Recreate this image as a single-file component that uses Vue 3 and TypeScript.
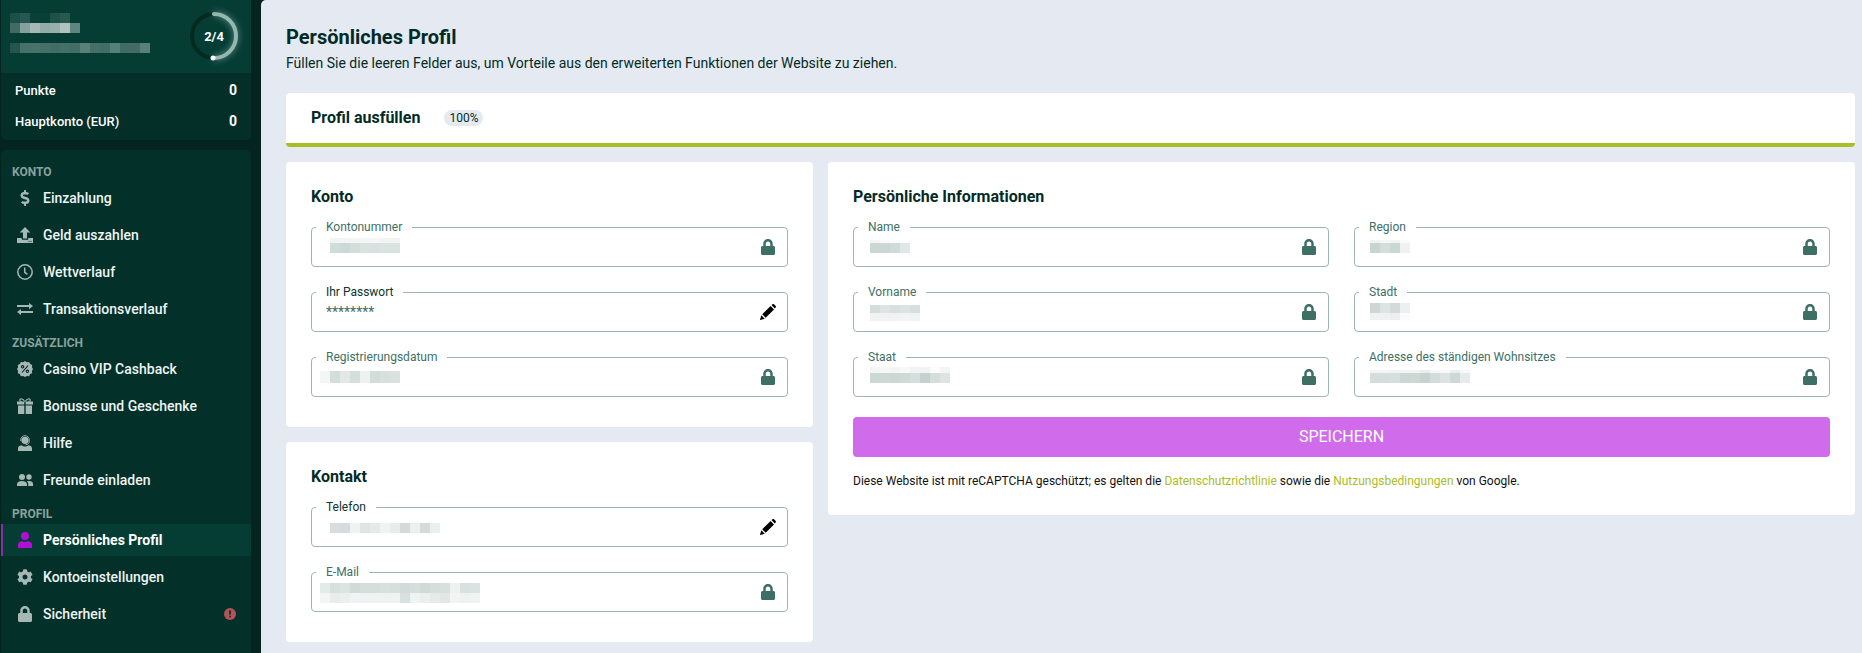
<script setup lang="ts">
interface MosaicRow {
  x: number
  y: number
  h: number
  cells: string[]
}

interface Field {
  id: string
  label: string
  value?: string
  editable?: boolean
  mosaic?: MosaicRow[]
}

interface NavItem {
  label: string
  icon: string
  active?: boolean
  alert?: boolean
}

interface NavGroup {
  title: string
  items: NavItem[]
}

const CELL = 10

const groups: NavGroup[] = [
  {
    title: 'Konto',
    items: [
      { label: 'Einzahlung', icon: 'dollar' },
      { label: 'Geld auszahlen', icon: 'upload' },
      { label: 'Wettverlauf', icon: 'clock' },
      { label: 'Transaktionsverlauf', icon: 'exchange' },
    ],
  },
  {
    title: 'Zusätzlich',
    items: [
      { label: 'Casino VIP Cashback', icon: 'percent' },
      { label: 'Bonusse und Geschenke', icon: 'gift' },
      { label: 'Hilfe', icon: 'support' },
      { label: 'Freunde einladen', icon: 'friends' },
    ],
  },
  {
    title: 'Profil',
    items: [
      { label: 'Persönliches Profil', icon: 'user', active: true },
      { label: 'Kontoeinstellungen', icon: 'cog' },
      { label: 'Sicherheit', icon: 'lock', alert: true },
    ],
  },
]

const nameMosaic: MosaicRow[] = [
  { x: 0, y: 0, h: 10, cells: ['#1c4f47', '#275850', '#0a4038', '#083f37', '#1e5148', '#27594f'] },
  { x: 0, y: 10, h: 10, cells: ['#3f6b64', '#84a29d', '#a4b9b6', '#93aca8', '#98b0ac', '#b0c3c0', '#5f857e'] },
  { x: 0, y: 30, h: 10, cells: ['#24564d', '#46716a', '#487169', '#45706a', '#426d66', '#45706a', '#426d66', '#5a807a', '#45706a', '#426d66', '#55807a', '#416c65', '#426d66', '#5b807a'] },
]

const account: Field[] = [
  {
    id: 'kontonummer', label: 'Kontonummer',
    mosaic: [
      { x: 18, y: 10, h: 5, cells: ['#f0f4f3', '#f3f5f5', '#f3f5f5', '#f3f6f5', '#f5f6f6', '#f2f5f4', '#f1f4f3'] },
      { x: 18, y: 15, h: 10, cells: ['#cfdcd9', '#ccd9d6', '#d3dedb', '#d8e2df', '#d8e1df', '#dae3e1', '#d9e3e0'] },
    ],
  },
  { id: 'passwort', label: 'Ihr Passwort', value: '********', editable: true },
  {
    id: 'registrierung', label: 'Registrierungsdatum',
    mosaic: [
      { x: 8, y: 13, h: 12, cells: ['#f4f5f5', '#d3ddda', '#e3e8e7', '#d6dedc', '#edf1f0', '#d2dcd9', '#d8e0de', '#dae2e0'] },
    ],
  },
]

const contact: Field[] = [
  {
    id: 'telefon', label: 'Telefon', editable: true,
    mosaic: [
      { x: 18, y: 15, h: 10, cells: ['#d6dfdd', '#d4dddb', '#f0f3f3', '#dee5e3', '#e5eae9', '#f0f3f3', '#e8edec', '#d2dcd9', '#ecf0ef', '#d2dcd9', '#ebefee'] },
    ],
  },
  {
    id: 'email', label: 'E-Mail',
    mosaic: [
      { x: 8, y: 10, h: 10, cells: ['#e4eae8', '#d7e0dd', '#dce4e2', '#d0dad7', '#d5dedb', '#d5dedb', '#d7e0dd', '#d6dfdc', '#d2dbd9', '#d5dedc', '#cfd9d6', '#d4dedb', '#d7e0dd', '#edf1f0', '#d8e1df', '#dae3e1'] },
      { x: 8, y: 20, h: 10, cells: ['#f2f5f4', '#e8edec', '#ebf0ef', '#f0f3f3', '#eef2f1', '#eef2f1', '#eef2f1', '#eef2f1', '#d8e0df', '#f0f3f3', '#ebefee', '#e6ebea', '#e0e7e5', '#f1f4f3', '#eef2f1', '#eff3f2'] },
    ],
  },
]

const personal: Field[] = [
  {
    id: 'name', label: 'Name',
    mosaic: [
      { x: 16, y: 12, h: 3, cells: ['#f4f6f6', '#f8f9f9', '#fafbfb'] },
      { x: 16, y: 15, h: 10, cells: ['#cad7d3', '#cbd7d4', '#d0dbd8', '#e1e6e6'] },
    ],
  },
  {
    id: 'region', label: 'Region',
    mosaic: [
      { x: 15, y: 12, h: 3, cells: ['#eff2f2', '#f5f7f7', '#f0f4f3', '#f9fafa'] },
      { x: 15, y: 15, h: 10, cells: ['#c7d4d0', '#d3dedb', '#cad8d4', '#eff2f1'] },
    ],
  },
  {
    id: 'vorname', label: 'Vorname',
    mosaic: [
      { x: 16, y: 12, h: 8, cells: ['#d5dddb', '#dee4e3', '#d8e0de', '#dde3e2', '#d5dfdc'] },
      { x: 16, y: 20, h: 8, cells: ['#f0f3f2', '#eff3f2', '#f0f3f2', '#f1f4f3', '#f0f3f3'] },
    ],
  },
  {
    id: 'stadt', label: 'Stadt',
    mosaic: [
      { x: 15, y: 10, h: 10, cells: ['#cfd7d5', '#dde2e2', '#d3dad9', '#edf0f0'] },
      { x: 15, y: 20, h: 7, cells: ['#f0f2f2', '#eff1f1', '#ecefee', '#fafbfb'] },
    ],
  },
  {
    id: 'staat', label: 'Staat',
    mosaic: [
      { x: 16, y: 9, h: 6, cells: ['#f3f6f5', '#f6f8f7', '#f2f5f4', '#f7f9f8', '#eff3f2', '#f2f4f4', '#fbfcfc', '#f4f6f5'] },
      { x: 16, y: 15, h: 10, cells: ['#ccd8d5', '#ced9d6', '#ccd8d4', '#cfdad7', '#d5dedc', '#c5d1cd', '#d5dedb', '#dee4e2'] },
    ],
  },
  {
    id: 'adresse', label: 'Adresse des ständigen Wohnsitzes',
    mosaic: [
      { x: 15, y: 12, h: 3, cells: ['#f3f5f5', '#f2f5f4', '#eff3f2', '#f1f4f3', '#f3f5f5', '#e8eeec', '#f5f7f7', '#f7f9f8', '#eaefee', '#f7f8f8'] },
      { x: 15, y: 15, h: 10, cells: ['#d3dddb', '#d5dedc', '#d6dfdd', '#cbd7d3', '#cdd8d5', '#c6d3cf', '#d2dcda', '#dce3e2', '#ced9d6', '#e7eaea'] },
    ],
  },
]

const sections = [
  { title: 'Konto', fields: account },
  { title: 'Kontakt', fields: contact },
]
</script>

<template>
  <svg class="sprite" aria-hidden="true">
    <symbol id="i-dollar" viewBox="-112 0 512 512"><path d="M209.200 233.400l-108-31.600C88.700 198.200 80 186.500 80 173.500c0-16.300 13.200-29.500 29.500-29.500h66.300c12.200 0 24.200 3.700 34.200 10.500 6.100 4.100 14.300 3.100 19.500-2l34.800-34c7.100-6.900 6.100-18.400-1.800-24.500C238 74.800 207.400 64.100 176 64V16c0-8.800-7.200-16-16-16h-32c-8.800 0-16 7.200-16 16v48h-2.500C45.800 64-5.400 118.700.5 183.600c4.200 46.100 39.400 83.600 83.800 96.600l102.500 30c12.500 3.700 21.200 15.300 21.200 28.300 0 16.300-13.200 29.500-29.500 29.500h-66.300C100 368 88 364.300 78 357.500c-6.100-4.100-14.300-3.100-19.500 2l-34.800 34c-7.100 6.900-6.100 18.400 1.800 24.500 24.500 19.200 55.100 29.900 86.500 30v48c0 8.800 7.200 16 16 16h32c8.800 0 16-7.200 16-16v-48.200c46.600-.9 90.300-28.600 105.700-72.700 21.500-61.600-14.600-124.800-72.500-141.700z" /></symbol>
    <symbol id="i-upload" viewBox="0 0 16 16"><path d="M8 0l5.300 5.400H10v6.100H6V5.400H2.700zM0 11h4.800v1.700h6.400V11H16v5H0z" /><circle cx="12" cy="14.300" r=".6" fill="#04302a" /><circle cx="14" cy="14.300" r=".6" fill="#04302a" /></symbol>
    <symbol id="i-clock" viewBox="0 0 16 16"><circle cx="8" cy="8" r="7.200" fill="none" stroke="currentColor" stroke-width="1.500" /><path d="M7.700 3.400v5l2.700 2" fill="none" stroke="currentColor" stroke-width="1.500" /></symbol>
    <symbol id="i-exchange" viewBox="0 0 16 16"><path d="M0 4h12V2l4 3.100-4 3.100V6.100H0zM16 10H4V7.900L0 11l4 3.100v-2h12z" /></symbol>
    <symbol id="i-percent" viewBox="0 0 16 16"><path d="M8 0l1.900 1.300 2.300-.3.900 2.100 2.100.9-.3 2.300L16 8l-1.100 1.900.3 2.300-2.100.9-.9 2.100-2.300-.3L8 16l-1.900-1.100-2.300.3-.9-2.100-2.100-.9.300-2.300L0 8l1.100-1.700L.800 4l2.100-.9.900-2.100 2.300.3z" /><g fill="none" stroke="#04302a" stroke-width="1.100"><path d="M11 4.600l-6 6.900" /><circle cx="5.600" cy="5.800" r="1.200" /><circle cx="10.400" cy="10.300" r="1.200" /></g></symbol>
    <symbol id="i-gift" viewBox="0 0 16 16"><path d="M0 3.500h7.300v3H0zM8.700 3.500H16v3H8.700zM1 7.500h6.300V16H1zM8.700 7.500H15V16H8.700z" /><path d="M7.600 3.500C6.500.6 3 .2 2.800 2c-.1 1 .7 1.500 1.800 1.500M8.400 3.500C9.500.6 13 .2 13.200 2c.1 1-.7 1.500-1.800 1.500" fill="none" stroke="currentColor" stroke-width="1.100" /></symbol>
    <symbol id="i-support" viewBox="0 0 16 16"><circle cx="8" cy="5.300" r="3.600" /><path d="M3.700 6V5a4.300 4.300 0 018.600 0v1.300c0 2-1.300 3.300-3.800 3.400" fill="none" stroke="currentColor" stroke-width=".9" /><path d="M1 16v-2.500c0-1.800 1.300-2.800 3.400-3.200C5.500 11.100 6.700 11.500 8 11.500s2.500-.4 3.600-1.200c2.100.4 3.400 1.400 3.400 3.200V16z" /></symbol>
    <symbol id="i-friends" viewBox="0 0 16 16"><circle cx="5" cy="5" r="3" /><circle cx="12" cy="5" r="2.700" /><path d="M0 14v-1.500C0 10.200 1.800 9 5 9s5 1.200 5 3.500V14zM11.200 14v-1.800c0-1.300-.5-2.300-1.400-3.100.6-.1 1.300-.2 2.200-.2 2.600 0 4 1.100 4 2.900V14z" /></symbol>
    <symbol id="i-user" viewBox="0 0 16 16"><circle cx="8" cy="4" r="4" /><path d="M1 16v-2.600C1 10.800 2.600 9.300 5 9.300c1 .5 2 .7 3 .7s2-.2 3-.7c2.400 0 4 1.500 4 4.100V16z" /></symbol>
    <symbol id="i-cog" viewBox="0 0 512 512"><path d="M487.400 315.700l-42.600-24.600c4.300-23.200 4.300-47 0-70.200l42.600-24.600c4.900-2.800 7.100-8.600 5.500-14-11.100-35.600-30-67.800-54.700-94.600-3.800-4.100-10-5.100-14.800-2.300L380.800 110c-17.900-15.400-38.500-27.300-60.800-35.100V25.800c0-5.600-3.900-10.500-9.400-11.700-36.700-8.200-74.300-7.800-109.200 0-5.500 1.200-9.400 6.100-9.400 11.700V75c-22.200 7.900-42.800 19.800-60.800 35.100L88.700 85.500c-4.900-2.800-11-1.900-14.800 2.300-24.700 26.700-43.600 58.900-54.700 94.600-1.700 5.400.6 11.200 5.500 14L67.300 221c-4.300 23.200-4.300 47 0 70.200l-42.600 24.600c-4.900 2.800-7.100 8.600-5.500 14 11.100 35.600 30 67.800 54.700 94.600 3.800 4.100 10 5.100 14.800 2.300l42.600-24.600c17.900 15.400 38.500 27.300 60.800 35.100v49.200c0 5.600 3.900 10.500 9.400 11.700 36.700 8.200 74.300 7.800 109.200 0 5.500-1.200 9.400-6.100 9.400-11.700v-49.200c22.200-7.900 42.800-19.800 60.800-35.100l42.600 24.600c4.900 2.800 11 1.900 14.800-2.300 24.700-26.700 43.600-58.900 54.700-94.600 1.500-5.500-.7-11.300-5.600-14.100zM256 336c-44.100 0-80-35.900-80-80s35.900-80 80-80 80 35.900 80 80-35.900 80-80 80z" /></symbol>
    <symbol id="i-lock" viewBox="-32 0 512 512"><path d="M400 224h-24v-72C376 68.200 307.800 0 224 0S72 68.200 72 152v72H48c-26.500 0-48 21.500-48 48v192c0 26.500 21.500 48 48 48h352c26.500 0 48-21.500 48-48V272c0-26.500-21.500-48-48-48zm-104 0H152v-72c0-39.700 32.300-72 72-72s72 32.300 72 72v72z" /></symbol>
    <symbol id="i-pencil" viewBox="0 0 16 16"><path d="M11.500 1.100l.8-.7c.6-.5 1.300-.5 1.900 0l1.300 1.300c.6.600.6 1.300.1 1.900l-.8.9zM10.600 2l3.400 3.500-8.300 8.300-3.500-3.500zM1.300 11.300l3.500 3.400L.3 16c-.2 0-.3-.1-.3-.3z" /></symbol>
  </svg>

  <div class="page">
    <aside class="sidebar">
      <section class="account">
        <div class="account-head">
          <svg class="masked-name" width="140" height="40" aria-hidden="true">
            <g v-for="(row, r) in nameMosaic" :key="r">
              <rect v-for="(c, i) in row.cells" :key="i" :x="row.x + i * CELL" :y="row.y" :width="CELL" :height="row.h" :fill="c" />
            </g>
          </svg>
          <div class="ring">
            <svg viewBox="0 0 60 60" aria-hidden="true">
              <defs>
                <filter id="glow" x="-50%" y="-50%" width="200%" height="200%"><feGaussianBlur stdDeviation="3" /></filter>
              </defs>
              <circle cx="30" cy="30" r="22" fill="none" stroke="#04291f" stroke-width="4" />
              <path d="M30 8a22 22 0 010 44" fill="none" stroke="#8cb5ad" stroke-width="5" opacity=".6" filter="url(#glow)" />
              <path d="M30 8a22 22 0 010 44" fill="none" stroke="#93b8b1" stroke-width="4" stroke-linecap="round" />
              <circle cx="29" cy="52" r="2.500" fill="#fff" />
            </svg>
            <span>2/4</span>
          </div>
        </div>
        <dl class="balance">
          <div><dt>Punkte</dt><dd>0</dd></div>
          <div><dt>Hauptkonto (EUR)</dt><dd>0</dd></div>
        </dl>
      </section>

      <nav class="menu">
        <section v-for="group in groups" :key="group.title">
          <h2>{{ group.title }}</h2>
          <ul>
            <li v-for="item in group.items" :key="item.label">
              <a href="#" :class="{ active: item.active }">
                <svg class="icon"><use :href="'#i-' + item.icon" /></svg>
                <span>{{ item.label }}</span>
                <svg v-if="item.alert" class="alert" viewBox="0 0 12 12" aria-hidden="true"><circle cx="6" cy="6" r="6" fill="#b0545a" /><path d="M5 2.500h2l-.3 4.300H5.300zM5.200 7.700h1.600v1.600H5.200z" fill="#04302a" /></svg>
              </a>
            </li>
          </ul>
        </section>
      </nav>
    </aside>

    <main class="content">
      <header class="intro">
        <h1>Persönliches Profil</h1>
        <p>Füllen Sie die leeren Felder aus, um Vorteile aus den erweiterten Funktionen der Website zu ziehen.</p>
      </header>

      <section class="completion">
        <h2>Profil ausfüllen</h2>
        <span class="badge">100%</span>
      </section>

      <div class="columns">
        <div class="stack">
          <section v-for="section in sections" :key="section.title" class="card">
            <h2>{{ section.title }}</h2>
            <div class="fields">
              <div v-for="f in section.fields" :key="f.id" class="field" :class="{ editable: f.editable }">
                <label :for="f.id">{{ f.label }}</label>
                <input :id="f.id" type="text" :value="f.value" readonly>
                <svg v-if="f.mosaic" class="mosaic" aria-hidden="true">
                  <g v-for="(row, r) in f.mosaic" :key="r">
                    <rect v-for="(c, i) in row.cells" :key="i" :x="row.x + i * CELL" :y="row.y" :width="CELL" :height="row.h" :fill="c" />
                  </g>
                </svg>
                <button v-if="f.editable" type="button" :aria-label="f.label + ' bearbeiten'"><svg class="icon"><use href="#i-pencil" /></svg></button>
                <svg v-else class="icon"><use href="#i-lock" /></svg>
              </div>
            </div>
          </section>
        </div>

        <form class="card personal" @submit.prevent>
          <h2>Persönliche Informationen</h2>
          <div class="fields two">
            <div v-for="f in personal" :key="f.id" class="field">
              <label :for="f.id">{{ f.label }}</label>
              <input :id="f.id" type="text" readonly>
              <svg class="mosaic" aria-hidden="true">
                <g v-for="(row, r) in f.mosaic" :key="r">
                  <rect v-for="(c, i) in row.cells" :key="i" :x="row.x + i * CELL" :y="row.y" :width="CELL" :height="row.h" :fill="c" />
                </g>
              </svg>
              <svg class="icon"><use href="#i-lock" /></svg>
            </div>
          </div>
          <button class="save" type="submit">Speichern</button>
          <p class="legal">Diese Website ist mit reCAPTCHA geschützt; es gelten die <a href="#">Datenschutzrichtlinie</a> sowie die <a href="#">Nutzungsbedingungen</a> von Google.</p>
        </form>
      </div>
    </main>
  </div>
</template>

<style>
body {
  margin: 0;
  background: #03241f;
}
</style>

<style scoped>
* {
  box-sizing: border-box;
}

h1, h2, p, ul, dl, dd {
  margin: 0;
  padding: 0;
}

ul {
  list-style: none;
}

.sprite {
  display: none;
}

.icon {
  width: 16px;
  height: 16px;
  flex: none;
  fill: currentColor;
}

.page {
  display: flex;
  min-height: 100vh;
  font-family: Roboto, "Liberation Sans", sans-serif;
  font-size: 14px;
  color: #032b26;
}

.sidebar {
  width: 261px;
  flex: none;
  display: flex;
  flex-direction: column;
  gap: 10px;
  padding: 0 10px 0 1px;
  color: #fff;
}

.account {
  background: #042e28;
  border-radius: 0 0 5px 5px;
}

.account-head {
  height: 73px;
  display: flex;
  align-items: flex-start;
  justify-content: space-between;
  padding: 6px 7px 0 9px;
  background: #053d34;
}

.masked-name {
  margin-top: 7px;
}

.ring {
  width: 60px;
  height: 60px;
  position: relative;
}

.ring svg {
  width: 60px;
  height: 60px;
  overflow: visible;
}

.ring span {
  position: absolute;
  inset: 0;
  display: grid;
  place-items: center;
  font-size: 13px;
  font-weight: 700;
}

.balance {
  padding: 2px 14px 3px;
  font-size: 13px;
  font-weight: 500;
}

.balance div {
  display: flex;
  justify-content: space-between;
  line-height: 31px;
}

.balance dd {
  font-size: 14px;
  font-weight: 700;
}

.menu {
  flex: 1;
  padding-top: 9px;
  background: #04302a;
  border-radius: 5px 5px 0 0;
}

.menu h2 {
  padding: 3px 11px 0;
  font-size: 12px;
  line-height: 20px;
  font-weight: 700;
  text-transform: uppercase;
  color: #8aa29d;
}

.menu li {
  padding-bottom: 5px;
}

.menu a {
  display: flex;
  align-items: center;
  gap: 10px;
  height: 32px;
  padding: 0 15px 0 14px;
  border-left: 2px solid transparent;
  color: #eef4f2;
  font-weight: 500;
  text-decoration: none;
}

.menu a .icon {
  color: #a5b8b5;
}

.menu a.active {
  background: #053d34;
  border-left-color: #8a2fa8;
  color: #fff;
  font-weight: 700;
}

.menu a.active .icon {
  color: #b10fd8;
}

.menu .alert {
  width: 12px;
  height: 12px;
  margin-left: auto;
}

.content {
  flex: 1;
  min-width: 0;
  padding: 25px 7px 10px 25px;
  background: #e5eaf2;
  border-top-left-radius: 5px;
}

h1 {
  font-size: 20px;
  line-height: 24px;
  font-weight: 700;
}

.intro p {
  line-height: 28px;
}

.completion {
  display: flex;
  align-items: center;
  gap: 24px;
  height: 54px;
  margin: 16px 0 15px;
  padding: 0 25px;
  background: #fff;
  border-bottom: 4px solid #abbd25;
  border-radius: 4px;
}

.completion h2,
.card h2 {
  font-size: 16px;
  line-height: 20px;
  font-weight: 700;
}

.badge {
  padding: 0 5px;
  font-size: 12px;
  line-height: 16px;
  border-radius: 8px;
  background: #e5eaf2;
}

.columns {
  display: grid;
  grid-template-columns: 527fr 1027fr;
  align-items: start;
  gap: 15px;
}

.stack {
  display: grid;
  gap: 15px;
}

.card {
  padding: 25px 25px 30px;
  background: #fff;
  border-radius: 4px;
}

.card.personal {
  padding-bottom: 24px;
}

.fields {
  display: grid;
  gap: 25px;
  margin-top: 20px;
}

.fields.two {
  grid-template-columns: 1fr 1fr;
}

.field {
  position: relative;
  display: flex;
  align-items: center;
  height: 40px;
  padding-right: 11px;
  border: 1px solid #9fb5b0;
  border-radius: 4px;
  color: #3d6f65;
}

.field label {
  position: absolute;
  top: -9px;
  left: 4px;
  padding: 0 10px;
  font-size: 12px;
  line-height: 16px;
  background: #fff;
}

.field.editable label {
  color: #0c332d;
}

.field input {
  flex: 1;
  min-width: 0;
  height: 38px;
  padding: 0 14px;
  border: 0;
  outline: 0;
  background: none;
  font: inherit;
  color: inherit;
}

.field button {
  display: flex;
  padding: 0;
  border: 0;
  background: none;
  color: #000;
}

.mosaic {
  position: absolute;
  top: 0;
  left: 0;
  width: 200px;
  height: 38px;
}

.save {
  width: 100%;
  height: 40px;
  margin-top: 20px;
  padding: 0 0 2px;
  border: 0;
  border-radius: 4px;
  background: #d06beb;
  color: #fff;
  font-family: inherit;
  font-size: 16px;
  text-transform: uppercase;
}

.legal {
  margin-top: 14px;
  font-size: 12px;
  line-height: 20px;
  color: #111;
}

.legal a {
  color: #abbd25;
  text-decoration: none;
}
</style>
